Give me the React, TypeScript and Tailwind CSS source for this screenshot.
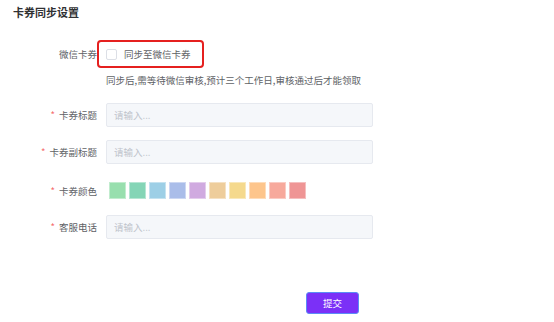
import { useState } from 'react'

const swatches = [
  'bg-[#98dfae]',
  'bg-[#84d5b6]',
  'bg-[#9dcfe6]',
  'bg-[#aabde9]',
  'bg-[#d0aae0]',
  'bg-[#eecd9b]',
  'bg-[#f5d98d]',
  'bg-[#fdc58c]',
  'bg-[#f7a99c]',
  'bg-[#ef9595]',
]

function Label({ children, required }: { children: string; required?: boolean }) {
  return (
    <div className="flex w-[97px] shrink-0 items-center justify-end text-[9.5px] leading-[14px] text-[#606266]">
      {required && <span className="mr-[4px] text-[#f56c6c]">*</span>}
      {children}
    </div>
  )
}

function TextField() {
  return (
    <input
      placeholder="请输入..."
      className="ml-[9px] h-[24px] w-[267px] rounded-[2px] border border-[#e6e9ef] bg-[#f5f7fa] px-[7px] text-[9.5px] text-[#606266] outline-none placeholder:text-[#c0c4cc]"
    />
  )
}

export default function App() {
  const [sync, setSync] = useState(false)
  const [color, setColor] = useState(-1)

  return (
    <div className="h-[322px] w-[554px] overflow-hidden bg-white font-['Noto_Sans_CJK_SC','Noto_Sans',sans-serif]">
      <h1 className="pl-[13px] pt-[4px] text-[11px] font-bold leading-[16px] text-[#303133]">卡券同步设置</h1>

      <div className="mt-[20px] flex items-center">
        <Label>微信卡券</Label>
        <label className="flex h-[28px] w-[107px] cursor-pointer items-center gap-[7px] rounded-[4px] border-2 border-[#e5201f] pl-[7px] text-[9.5px] text-[#606266]">
          <input
            type="checkbox"
            checked={sync}
            onChange={(e) => setSync(e.target.checked)}
            className="h-[11px] w-[11px] appearance-none rounded-[2px] border border-[#dcdfe6] bg-white checked:border-[#7b2ff7] checked:bg-[#7b2ff7]"
          />
          同步至微信卡券
        </label>
      </div>

      <p className="mt-[5px] pl-[106px] text-[9.5px] leading-[14px] text-[#606266]">
        同步后,需等待微信审核,预计三个工作日,审核通过后才能领取
      </p>

      <div className="mt-[16px] flex items-center">
        <Label required>卡券标题</Label>
        <TextField />
      </div>

      <div className="mt-[13px] flex items-center">
        <Label required>卡券副标题</Label>
        <TextField />
      </div>

      <div className="mt-[18px] flex items-center">
        <Label required>卡券颜色</Label>
        <div className="ml-[12px] flex gap-[3px]">
          {swatches.map((c, i) => (
            <button
              key={c}
              type="button"
              onClick={() => setColor(i)}
              className={`h-[17px] w-[17px] border ${c} ${color === i ? 'border-[#606266]' : 'border-white/40'}`}
            />
          ))}
        </div>
      </div>

      <div className="mt-[16px] flex items-center">
        <Label required>客服电话</Label>
        <TextField />
      </div>

      <div className="mt-[49px] pl-[306px]">
        <button
          type="button"
          className="h-[22px] w-[53px] rounded-[3px] border border-[#5a8cf6] bg-[#7b30f7] text-[9.5px] text-white"
        >
          提交
        </button>
      </div>
    </div>
  )
}
